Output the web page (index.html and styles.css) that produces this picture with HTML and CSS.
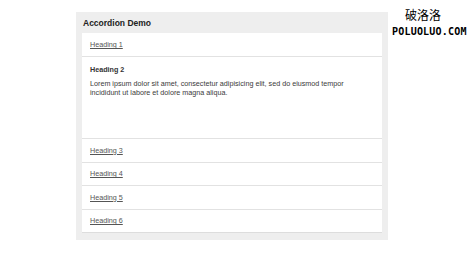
FILE: index.html
```html
<!DOCTYPE html>
<html lang="en">
<head>
    <meta charset="UTF-8">
    <meta name="viewport" content="width=device-width, initial-scale=1.0">
    <title>Accordion Demo</title>
    <link rel="stylesheet" href="styles.css">
</head>
<body>
    <div class="accordion">
        <h1 class="accordion-title">Accordion Demo</h1>
        <div class="panel">
            <div class="section"><a href="#" class="section-link">Heading 1</a></div>
            <div class="section open">
                <h2 class="section-heading">Heading 2</h2>
                <p class="section-text">Lorem ipsum dolor sit amet, consectetur adipisicing elit, sed do eiusmod tempor incididunt ut labore et dolore magna aliqua.</p>
            </div>
            <div class="section"><a href="#" class="section-link">Heading 3</a></div>
            <div class="section"><a href="#" class="section-link">Heading 4</a></div>
            <div class="section"><a href="#" class="section-link">Heading 5</a></div>
            <div class="section"><a href="#" class="section-link">Heading 6</a></div>
        </div>
    </div>

    <div class="watermark">
        <div class="watermark-cn">破洛洛</div>
        <div class="watermark-en">POLUOLUO.COM</div>
    </div>
</body>
</html>
```

FILE: styles.css
```css
body {
    margin: 0;
    background-color: white;
    font-family: "Liberation Sans", Arial, sans-serif;
}
.accordion {
    width: 300px;
    margin: 12px 0 0 76px;
    padding: 0 6px 7px 6px;
    background-color: #eeeeee;
}
.accordion-title {
    margin: 0;
    height: 21px;
    line-height: 22px;
    padding-left: 1px;
    font-size: 8.5px;
    font-weight: bold;
    color: #222;
}
.panel {
    background-color: white;
}
.section {
    height: 22.5px;
    padding-left: 8px;
    border-bottom: 1px solid #e2e2e2;
    display: flex;
    align-items: center;
}
.section:first-child {
    height: 23px;
}
.section:last-child {
    border-bottom: 1px solid #dddddd;
}
.section-link {
    font-size: 7.2px;
    color: #555555;
    text-decoration: underline;
}
.section.open {
    display: block;
    padding-top: 8px;
    box-sizing: border-box;
    height: 82px;
}
.section-heading {
    margin: 0 0 6px 0;
    font-size: 7.2px;
    font-weight: bold;
    color: #333333;
}
.section-text {
    margin: 0;
    font-size: 7.2px;
    line-height: 8.5px;
    color: #3a3a3a;
    width: 280px;
}
.watermark {
    position: absolute;
    top: 7px;
    left: 392px;
    width: 78px;
    color: black;
}
.watermark-cn {
    font-family: "Noto Sans CJK SC", sans-serif;
    font-size: 12px;
    line-height: 16px;
    padding-left: 13px;
}
.watermark-en {
    margin-top: 3px;
    font-family: "DejaVu Sans Mono", monospace;
    font-size: 10px;
    font-weight: bold;
    line-height: 11px;
    letter-spacing: 0.2px;
}
```
